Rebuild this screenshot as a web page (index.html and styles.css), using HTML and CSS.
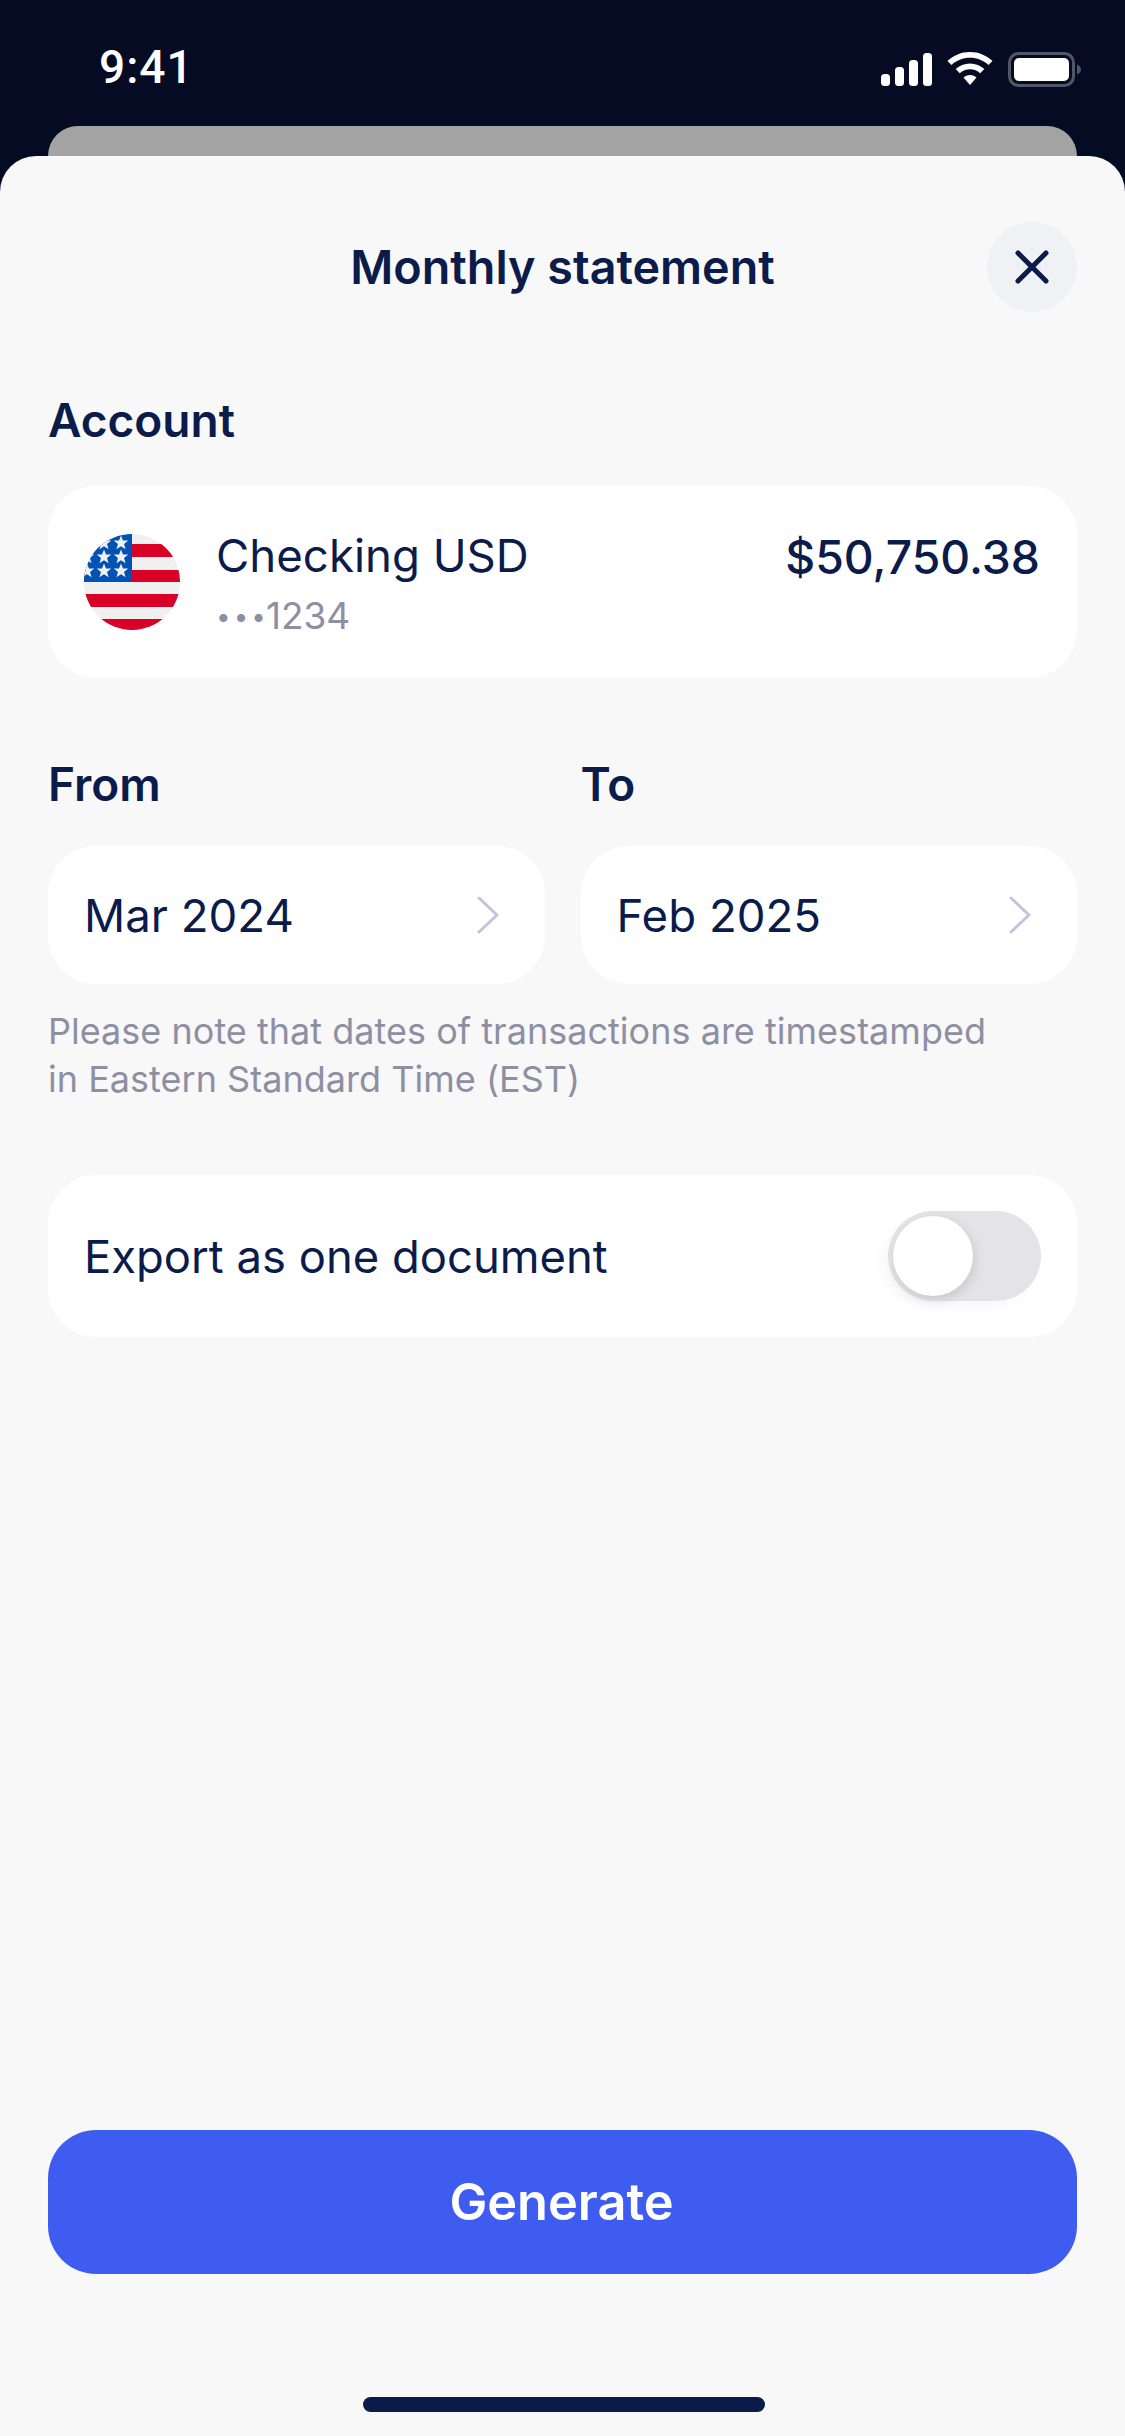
FILE: index.html
```html
<!DOCTYPE html>
<html lang="en">
<head>
<meta charset="utf-8">
<title>Monthly statement</title>
<link rel="stylesheet" href="styles.css">
</head>
<body>
<div class="screen">
  <header class="status">
    <span class="time">9:41</span>
    <div class="status-icons">
      <svg class="signal" width="51" height="33" viewBox="0 0 51 33"><rect x="0" y="21" width="9" height="12" rx="3.5"/><rect x="14" y="14" width="9" height="19" rx="3.5"/><rect x="28" y="7" width="9" height="26" rx="3.5"/><rect x="42" y="0" width="9" height="33" rx="3.5"/></svg>
      <svg class="wifi" width="46" height="33" viewBox="0 0 46 33"><path d="M23 0C14.300 0 6.500 3.400 0.500 8.900L4.500 13C9.400 8.500 15.900 5.800 23 5.800S36.600 8.500 41.500 13L45.500 8.900C39.500 3.400 31.700 0 23 0Z"/><path d="M23 11.500C17.500 11.500 12.500 13.600 8.700 17.100L12.800 21.200C15.500 18.800 19.100 17.300 23 17.300S30.500 18.800 33.200 21.200L37.300 17.100C33.500 13.600 28.500 11.500 23 11.500Z"/><path d="M23 23C20.500 23 18.200 24 16.500 25.500L23 33L29.500 25.500C27.800 24 25.500 23 23 23Z"/></svg>
      <svg class="battery" width="73" height="35" viewBox="0 0 73 35"><rect x="1.500" y="1.500" width="64" height="32" rx="9" fill="none" stroke="#525666" stroke-width="3"/><rect x="6" y="6" width="55" height="23" rx="5" fill="#fff"/><path d="M69 12.500C71.500 13.500 73 15.300 73 17.500S71.500 21.500 69 22.500Z" fill="#525666"/></svg>
    </div>
  </header>
  <div class="peek"></div>
  <main class="sheet">
    <div class="sheet-head">
      <h1 class="title">Monthly statement</h1>
      <button class="close" aria-label="Close">
        <svg width="34" height="34" viewBox="0 0 34 34"><path d="M3 3L31 31M31 3L3 31" fill="none" stroke="#0b1c4a" stroke-width="5" stroke-linecap="round"/></svg>
      </button>
    </div>

    <h2 class="label label-account">Account</h2>
    <section class="card account">
      <svg class="flag" width="96" height="96" viewBox="0 0 96 96">
        <defs>
          <clipPath id="disc"><circle cx="48" cy="48" r="48"/></clipPath>
          <polygon id="star" points="0,-7.500 2,-2.400 7.300,-2.400 3,1 4.600,6.300 0,3.200 -4.600,6.300 -3,1 -7.300,-2.400 -2,-2.400" fill="#f0f0f0"/>
        </defs>
        <g clip-path="url(#disc)">
          <rect width="96" height="96" fill="#f0f0f0"/>
          <rect y="10" width="96" height="13" fill="#d80027"/>
          <rect y="36" width="96" height="12" fill="#d80027"/>
          <rect y="60" width="96" height="13" fill="#d80027"/>
          <rect y="85" width="96" height="11" fill="#d80027"/>
          <rect width="48" height="48" fill="#0052b4"/>
          <use href="#star" x="37" y="9"/><use href="#star" x="20" y="9"/>
          <use href="#star" x="37" y="23"/><use href="#star" x="20" y="23"/><use href="#star" x="3" y="23"/>
          <use href="#star" x="37" y="37"/><use href="#star" x="20" y="37"/><use href="#star" x="3" y="37"/>
        </g>
      </svg>
      <div class="account-text">
        <div class="account-name">Checking USD</div>
        <div class="account-num"><span class="dots">•••</span>1234</div>
      </div>
      <div class="amount">$50,750.38</div>
    </section>

    <div class="dates">
      <div class="date-col">
        <h2 class="label">From</h2>
        <div class="card date">
          <span>Mar 2024</span>
          <svg width="22" height="38" viewBox="0 0 22 38"><path d="M2 2L20 19L2 36" fill="none" stroke="#c3c3d9" stroke-width="3" stroke-linecap="round" stroke-linejoin="round"/></svg>
        </div>
      </div>
      <div class="date-col">
        <h2 class="label">To</h2>
        <div class="card date">
          <span>Feb 2025</span>
          <svg width="22" height="38" viewBox="0 0 22 38"><path d="M2 2L20 19L2 36" fill="none" stroke="#c3c3d9" stroke-width="3" stroke-linecap="round" stroke-linejoin="round"/></svg>
        </div>
      </div>
    </div>

    <p class="note">Please note that dates of transactions are timestamped<br>in Eastern Standard Time (EST)</p>

    <section class="card export">
      <span>Export as one document</span>
      <div class="toggle"><div class="knob"></div></div>
    </section>

    <button class="generate">Generate</button>
    <div class="home-indicator"></div>
  </main>
</div>
</body>
</html>
```
FILE: styles.css
```css
* { box-sizing: border-box; }
html, body { margin: 0; padding: 0; }
body {
  width: 1125px;
  height: 2436px;
  background: #050b22;
  font-family: Inter, "Noto Sans", sans-serif;
  color: #0b1c4a;
  overflow: hidden;
}
.screen { display: flex; flex-direction: column; height: 2436px; }

.status {
  height: 126px;
  flex: none;
  display: flex;
  justify-content: space-between;
  align-items: flex-start;
  padding: 45px 44px 0 99px;
}
.time { font-size: 46px; line-height: 45px; font-weight: 500; letter-spacing: 1px; color: #fff; font-family: Roboto, sans-serif; }
.status-icons { display: flex; align-items: flex-start; padding-top: 7px; }
.status-icons svg { fill: #fff; display: block; }
.signal { margin-top: 1px; }
.wifi { margin-left: 15px; }
.battery { margin-left: 15px; }

.peek {
  height: 30px;
  flex: none;
  margin: 0 48px;
  background: #a3a3a3;
  border-radius: 30px 30px 0 0;
}

.sheet {
  flex: 1;
  display: flex;
  flex-direction: column;
  background: #f8f8f9;
  border-radius: 36px 36px 0 0;
  padding: 0 48px;
}

.sheet-head {
  height: 90px;
  margin-top: 66px;
  display: flex;
  align-items: center;
  justify-content: center;
  position: relative;
}
.title { margin: 0; font-size: 46.7px; font-weight: 600; line-height: 60px; }
.close {
  position: absolute;
  right: 0;
  top: 0;
  width: 90px;
  height: 90px;
  padding: 0;
  border: 0;
  border-radius: 50%;
  background: #f0f1f4;
  display: flex;
  align-items: center;
  justify-content: center;
}

.label { margin: 0 0 34px; font-size: 46px; line-height: 56px; font-weight: 600; }
.label-account { margin-top: 80px; margin-bottom: 38px; }

.card { background: #fff; border-radius: 48px; }

.account {
  height: 192px;
  display: flex;
  align-items: center;
  padding: 0 37px 0 36px;
}
.flag { flex: none; display: block; }
.account-text { margin-left: 36px; flex: 1; }
.account-name { font-size: 45.6px; line-height: 56px; font-weight: 400; margin-top: 2px; }
.account-num { font-size: 37px; line-height: 44px; color: #8f8fa3; margin-top: 10px; }
.dots { font-size: 26px; letter-spacing: 3px; margin-right: -3px; vertical-align: 3px; line-height: 1; }
.amount { font-size: 46.3px; line-height: 56px; font-weight: 500; margin-top: -51px; }

.dates { display: flex; gap: 36px; margin-top: 78px; }
.date-col { flex: 1; min-width: 0; }
.date {
  height: 138px;
  display: flex;
  align-items: center;
  justify-content: space-between;
  padding: 0 46px 0 36px;
  font-size: 45.6px;
}

.note {
  margin: 23px 0 0;
  font-size: 36px;
  line-height: 48px;
  letter-spacing: 0.02px;
  color: #8f8fa3;
}

.export {
  margin-top: 72px;
  height: 162px;
  display: flex;
  align-items: center;
  justify-content: space-between;
  padding: 0 36px;
  font-size: 45.4px;
}
.toggle {
  width: 153px;
  height: 90px;
  border-radius: 45px;
  background: #e3e3e8;
  padding: 5px;
  box-shadow: -6px 6px 14px rgba(0,0,0,0.03);
}
.knob {
  width: 80px;
  height: 80px;
  border-radius: 50%;
  background: #fff;
  box-shadow: 2px 4px 12px rgba(0,0,0,0.12);
}

.generate {
  margin-top: auto;
  height: 144px;
  flex: none;
  border: 0;
  border-radius: 48px;
  background: #3f5cf0;
  color: #fff;
  font-family: inherit;
  font-size: 50.5px;
  font-weight: 600;
  padding: 0 2px 2px 0;
}
.home-indicator {
  flex: none;
  align-self: center;
  width: 402px;
  height: 15px;
  border-radius: 8px;
  background: #0b1c4a;
  margin: 123px 0 24px 2px;
}
```
